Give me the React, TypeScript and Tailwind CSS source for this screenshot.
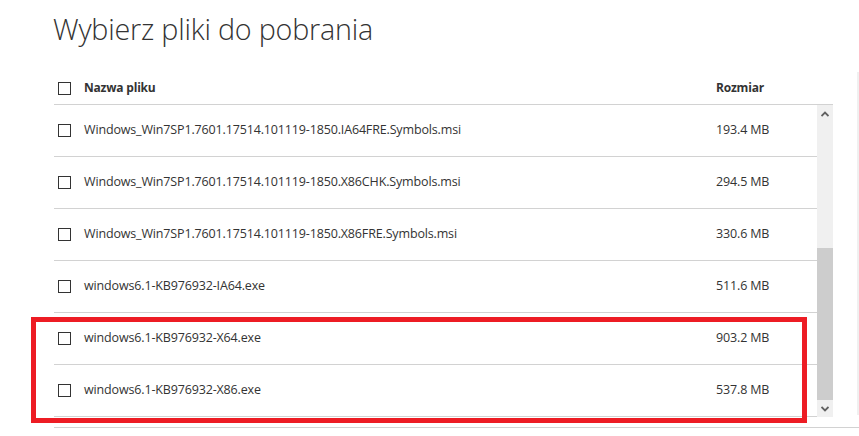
import React from 'react';

type FileRow = {
  name: string;
  size: string;
};

const files: FileRow[] = [
  { name: 'Windows_Win7SP1.7601.17514.101119-1850.IA64FRE.Symbols.msi', size: '193.4 MB' },
  { name: 'Windows_Win7SP1.7601.17514.101119-1850.X86CHK.Symbols.msi', size: '294.5 MB' },
  { name: 'Windows_Win7SP1.7601.17514.101119-1850.X86FRE.Symbols.msi', size: '330.6 MB' },
  { name: 'windows6.1-KB976932-IA64.exe', size: '511.6 MB' },
  { name: 'windows6.1-KB976932-X64.exe', size: '903.2 MB' },
  { name: 'windows6.1-KB976932-X86.exe', size: '537.8 MB' },
];

function Checkbox() {
  return <span className="block w-[13px] h-[13px] border-[1.5px] border-[#333] bg-white shrink-0" />;
}

function Chevron({ up }: { up?: boolean }) {
  return (
    <svg width="8" height="6" viewBox="0 0 8 6" className="block">
      <path
        d={up ? 'M0.5 5 L4 1.5 L7.5 5' : 'M0.5 1 L4 4.5 L7.5 1'}
        fill="none"
        stroke="#606060"
        strokeWidth="1.8"
      />
    </svg>
  );
}

function Scrollbar() {
  return (
    <div className="w-[16px] flex flex-col bg-[#f0f0f0] shrink-0">
      <div className="h-[17px] flex items-center justify-center">
        <Chevron up />
      </div>
      <div className="flex-1 flex flex-col justify-end">
        <div className="h-[152px] bg-[#cdcdcd]" />
      </div>
      <div className="h-[17px] flex items-center justify-center">
        <Chevron />
      </div>
    </div>
  );
}

export default function App() {
  return (
    <div className="relative w-[859px] h-[436px] bg-white overflow-hidden text-[#333] font-['Open_Sans',sans-serif]">
      <h1 className="pl-[53px] pt-[11px] h-[72px] text-[28.7px] leading-[36px] font-light text-[#333] tracking-[-0.2px]">
        Wybierz pliki do pobrania
      </h1>

      <div className="flex pl-[54px]">
        <div className="w-[779px]">
          {/* Header */}
          <div className="flex items-center h-[33px] border-b border-[#d2d2d2]">
            <div className="w-[30px] pl-[4px]">
              <Checkbox />
            </div>
            <div className="flex-1 text-[12px] font-bold tracking-[-0.2px]">Nazwa pliku</div>
            <div className="w-[117px] text-[12px] font-bold tracking-[-0.2px]">Rozmiar</div>
          </div>

          {/* Body */}
          <div className="flex h-[312px]">
            <div className="flex-1">
              {files.map((f) => (
                <div key={f.name} className="flex items-center h-[52px] border-b border-[#d2d2d2]">
                  <div className="w-[30px] pl-[4px]">
                    <Checkbox />
                  </div>
                  <div className="flex-1 text-[12.5px] tracking-[-0.15px] text-[#333]">{f.name}</div>
                  <div className="w-[101px] text-[12.5px] tracking-[-0.15px] text-[#333]">{f.size}</div>
                </div>
              ))}
            </div>
            <Scrollbar />
          </div>
        </div>
        <div className="flex-1" />
        <div className="w-[2px] h-[343px] bg-[#f0f0f0]" />
      </div>

      <div className="ml-[54px] mt-[10px] border-t border-[#d2d2d2]" />

      {/* highlight */}
      <div className="absolute left-[31px] top-[317px] w-[776px] h-[106px] border-[5px] border-[#ed1c24]" />
    </div>
  );
}
